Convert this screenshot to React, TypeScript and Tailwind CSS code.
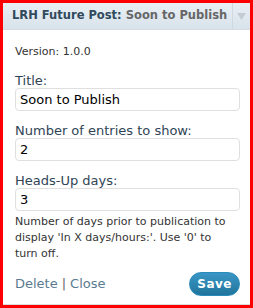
export default function App() {
  const font = { fontFamily: '"DejaVu Sans", Verdana, sans-serif' };

  return (
    <div
      className="w-[253px] h-[308px] border-[3px] border-[#ff0000] bg-white flex flex-col"
      style={font}
    >
      {/* Widget header */}
      <div className="h-[27px] flex items-stretch bg-gradient-to-b from-[#e9eff4] to-[#d9e3eb] border-b border-[#d4dde5]">
        <div className="flex-1 flex items-center pl-[9px] text-[11.5px] font-bold whitespace-nowrap overflow-hidden">
          <span className="text-[#2f4a5c]">LRH Future Post:</span>
          <span className="text-[#666] ml-[4px]">Soon to Publish</span>
        </div>
        <div className="w-[18px] flex items-center justify-center border-l border-[#cfd9e2]">
          <svg width="9" height="7" viewBox="0 0 9 7">
            <path d="M0 0h9L4.5 7z" fill="#c4ccd3" />
          </svg>
        </div>
      </div>

      {/* Body */}
      <div className="flex-1 flex flex-col pl-[12px] pr-[10px] pt-[15px]">
        <div className="text-[11px] leading-[13px] text-[#333]">Version: 1.0.0</div>

        <label className="mt-[16px] text-[13px] text-[#2f4556] leading-[13px]">Title:</label>
        <input
          className="mt-[1px] h-[23px] w-full border border-[#dfdfdf] rounded-[4px] px-[4px] text-[13px] text-black outline-none"
          style={font}
          defaultValue="Soon to Publish"
        />

        <label className="mt-[13px] text-[13px] text-[#2f4556] leading-[13px]">Number of entries to show:</label>
        <input
          className="mt-[1px] h-[23px] w-full border border-[#dfdfdf] rounded-[4px] px-[4px] text-[13px] text-black outline-none"
          style={font}
          defaultValue="2"
        />

        <label className="mt-[13px] text-[13px] text-[#2f4556] leading-[13px]">Heads-Up days:</label>
        <input
          className="mt-[1px] h-[23px] w-full border border-[#dfdfdf] rounded-[4px] px-[4px] text-[13px] text-black outline-none"
          style={font}
          defaultValue="3"
        />

        <p className="mt-[3px] w-[212px] text-[11px] leading-[16px] text-[#333]">
          Number of days prior to publication to display 'In X days/hours:'. Use '0' to turn off.
        </p>

        <div className="mt-auto mb-[8px] flex items-center justify-between">
          <div className="text-[13px] text-[#5a7a90]">
            <span>Delete</span>
            <span className="mx-[4px] text-[#666]">|</span>
            <span>Close</span>
          </div>
          <button className="h-[24px] px-[7px] rounded-full bg-gradient-to-b from-[#3a96c6] to-[#21759b] border border-[#298cba] text-white text-[12px] font-bold tracking-[0.5px]">
            Save
          </button>
        </div>
      </div>
      <div className="h-[1px] bg-[#dcdcdc]" />
    </div>
  );
}
